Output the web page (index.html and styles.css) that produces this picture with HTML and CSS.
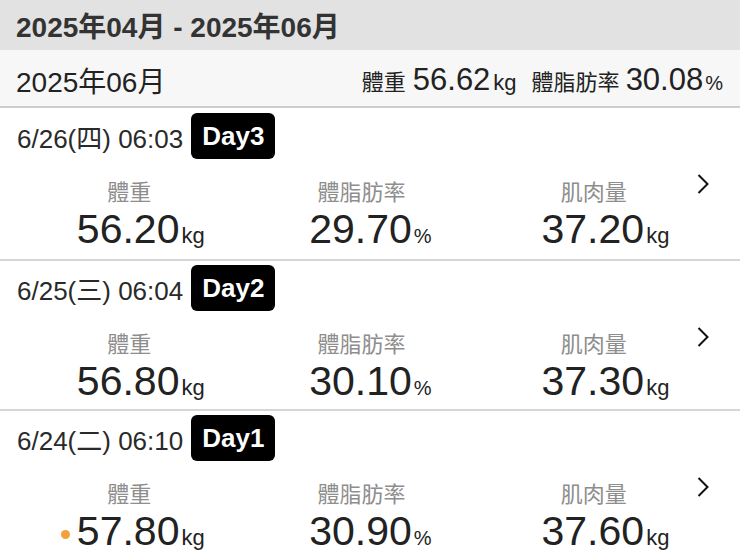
FILE: index.html
```html
<!DOCTYPE html>
<html lang="zh-Hant">
<head>
    <meta charset="UTF-8">
    <meta name="viewport" content="width=device-width, initial-scale=1.0">
    <title>體重記錄</title>
    <link rel="stylesheet" href="styles.css">
</head>
<body>

<div class="range">2025年04月 - 2025年06月</div>

<div class="month">
    <span class="month-title">2025年06月</span>
    <div class="summary">
        <span class="sum-label">體重</span>
        <span class="sum-num">56.62</span>
        <span class="sum-unit">kg</span>
        <span class="sum-label gap">體脂肪率</span>
        <span class="sum-num">30.08</span>
        <span class="sum-unit pct">%</span>
    </div>
</div>

<div class="record">
    <div class="record-head">
        <span class="record-date">6/26(四) 06:03</span>
        <span class="day-badge">Day3</span>
    </div>
    <div class="metrics">
        <div class="metric">
            <div class="metric-label">體重</div>
            <div class="metric-value"><span class="num">56.20</span><span class="unit">kg</span></div>
        </div>
        <div class="metric">
            <div class="metric-label">體脂肪率</div>
            <div class="metric-value"><span class="num">29.70</span><span class="unit pct">%</span></div>
        </div>
        <div class="metric">
            <div class="metric-label">肌肉量</div>
            <div class="metric-value"><span class="num">37.20</span><span class="unit">kg</span></div>
        </div>
    </div>
    <svg class="chevron" width="12" height="20" viewBox="0 0 12 20"><polyline points="1.5,1 10.5,10 1.5,19" /></svg>
</div>

<div class="record">
    <div class="record-head">
        <span class="record-date">6/25(三) 06:04</span>
        <span class="day-badge">Day2</span>
    </div>
    <div class="metrics">
        <div class="metric">
            <div class="metric-label">體重</div>
            <div class="metric-value"><span class="num">56.80</span><span class="unit">kg</span></div>
        </div>
        <div class="metric">
            <div class="metric-label">體脂肪率</div>
            <div class="metric-value"><span class="num">30.10</span><span class="unit pct">%</span></div>
        </div>
        <div class="metric">
            <div class="metric-label">肌肉量</div>
            <div class="metric-value"><span class="num">37.30</span><span class="unit">kg</span></div>
        </div>
    </div>
    <svg class="chevron" width="12" height="20" viewBox="0 0 12 20"><polyline points="1.5,1 10.5,10 1.5,19" /></svg>
</div>

<div class="record">
    <div class="record-head">
        <span class="record-date">6/24(二) 06:10</span>
        <span class="day-badge">Day1</span>
    </div>
    <div class="metrics">
        <div class="metric">
            <div class="metric-label">體重</div>
            <div class="metric-value"><span class="dot"></span><span class="num">57.80</span><span class="unit">kg</span></div>
        </div>
        <div class="metric">
            <div class="metric-label">體脂肪率</div>
            <div class="metric-value"><span class="num">30.90</span><span class="unit pct">%</span></div>
        </div>
        <div class="metric">
            <div class="metric-label">肌肉量</div>
            <div class="metric-value"><span class="num">37.60</span><span class="unit">kg</span></div>
        </div>
    </div>
    <svg class="chevron" width="12" height="20" viewBox="0 0 12 20"><polyline points="1.5,1 10.5,10 1.5,19" /></svg>
</div>

</body>
</html>
```

FILE: styles.css
```css
body {
    margin: 0;
    width: 740px;
    background: #fff;
    color: #222;
    font-family: "Liberation Sans", "Noto Sans CJK TC", sans-serif;
    overflow: hidden;
}

.range {
    height: 50px;
    display: flex;
    align-items: center;
    padding-left: 16px;
    background: #e2e2e2;
    color: #333;
    font-size: 28px;
    font-weight: bold;
}

.month {
    height: 58px;
    display: flex;
    align-items: center;
    justify-content: space-between;
    padding: 4px 17px 0 16px;
    box-sizing: border-box;
    background: #f7f7f7;
    border-bottom: 2px solid #cdcdcd;
}

.month-title {
    font-size: 28px;
}

.summary {
    display: flex;
    align-items: baseline;
    white-space: nowrap;
}

.sum-label {
    font-size: 22px;
    margin-right: 7px;
}

.sum-label.gap {
    margin-left: 15px;
    margin-right: 6px;
}

.sum-num {
    font-size: 31px;
}

.sum-num + .sum-unit {
    margin-left: 3px;
}

.sum-unit {
    font-size: 22px;
}

.sum-unit.pct {
    font-size: 20px;
    margin-left: 2px;
}

.record {
    position: relative;
    height: 150px;
    box-sizing: border-box;
    padding-top: 4px;
    border-bottom: 2px solid #d6d6d6;
}

.month + .record {
    height: 153px;
    padding-top: 5px;
}

.record-head {
    height: 46px;
    display: flex;
    align-items: center;
    gap: 8px;
    padding-left: 17px;
}

.record-date {
    font-size: 26px;
    color: #2a2a2a;
}

.day-badge {
    height: 46px;
    display: flex;
    align-items: center;
    padding: 0 11px;
    background: #000;
    color: #fff;
    border-radius: 6px;
    font-size: 26px;
    font-weight: bold;
}

.metrics {
    display: grid;
    grid-template-columns: repeat(3, 1fr);
    padding: 0 30px 0 13px;
    margin-top: 20px;
}

.metric {
    text-align: center;
}

.metric-label {
    font-size: 22px;
    line-height: 28px;
    color: #8e8e8e;
}

.metric-value {
    font-size: 41px;
    line-height: 44px;
    white-space: nowrap;
}

.unit {
    display: inline-block;
    width: 0;
    padding-left: 2px;
    font-size: 22px;
    text-align: left;
}

.unit.pct {
    font-size: 20px;
}

.dot {
    display: inline-block;
    width: 9px;
    height: 9px;
    margin: 0 7px 0 -16px;
    border-radius: 50%;
    background: #f4a03c;
    vertical-align: middle;
}

.chevron {
    position: absolute;
    top: 66px;
    right: 31px;
    fill: none;
    stroke: #111;
    stroke-width: 2;
}
```
